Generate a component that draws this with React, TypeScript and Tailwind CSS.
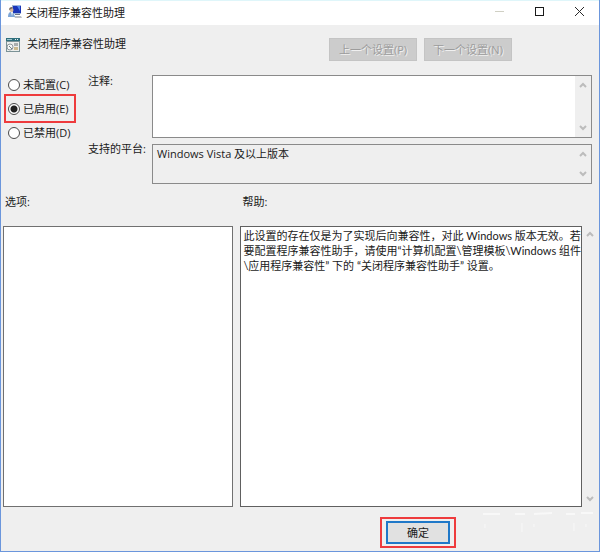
import { useState } from "react";

const FONT = "font-['Open_Sans','Noto_Sans_CJK_SC',sans-serif]";

function Chevron({ up = false }: { up?: boolean }) {
  return (
    <svg width="8" height="6" viewBox="0 0 8 6" fill="none" stroke="#bcbcbc" strokeWidth="2" aria-hidden="true">
      <path d={up ? "M1 5 L4 2 L7 5" : "M1 1 L4 4 L7 1"} />
    </svg>
  );
}

function ScrollTrack({ className }: { className: string }) {
  return (
    <div className={`flex flex-col items-center justify-between bg-[#efefef] ${className}`}>
      <Chevron up />
      <Chevron />
    </div>
  );
}

function ComputerIcon() {
  return (
    <svg width="14" height="14" viewBox="0 0 14 14" aria-hidden="true">
      <rect x="4" y="0" width="9" height="9" fill="#9fb4d8" />
      <rect x="5" y="1" width="8" height="7" fill="#1a35b8" />
      <path d="M9 1h3v5z" fill="#4f86ee" />
      <path d="M7 9h5v1H7z" fill="#6d7888" />
      <path d="M6 11h7l1 2H7z" fill="#b9bec6" />
      <circle cx="3.5" cy="5" r="2" fill="#d9b79a" />
      <path d="M1 5q0-3 3-3l1 1-2 1z" fill="#75685c" />
      <path d="M0 12q0-5 3-5t4 5z" fill="#7ea6d6" />
      <path d="M3 7l1 4 1-4z" fill="#f2f6fa" />
    </svg>
  );
}

function PolicyIcon() {
  return (
    <svg width="15" height="15" viewBox="0 0 15 15" aria-hidden="true">
      <rect x="0" y="1" width="14" height="14" fill="#7b9296" />
      <rect x="1" y="5" width="12" height="9" fill="#eceeec" />
      <rect x="0" y="1" width="14" height="3" fill="#2f6f7c" />
      <path d="M1 2.5h5" stroke="#9cc4cc" />
      <path d="M9 2.5h1M11 2.5h1" stroke="#e6eeee" />
      <circle cx="4" cy="10" r="3" fill="#f4f6f6" stroke="#8e989c" />
      <path d="M3 9l3 3" stroke="#6f8084" />
      <rect x="8" y="6" width="4" height="3" fill="#a9aeae" />
      <rect x="8" y="10" width="4" height="3" fill="#c9b98e" />
    </svg>
  );
}

const STATES = [
  { id: "unset", label: "未配置(C)" },
  { id: "enabled", label: "已启用(E)" },
  { id: "disabled", label: "已禁用(D)" },
];

export default function App() {
  const [state, setState] = useState("enabled");

  return (
    <div className={`flex h-screen flex-col border border-t-0 border-[#6b96dc] bg-[#efefef] text-[11px] leading-[15px] text-[#1a1a1a] ${FONT}`}>
      <header className="flex h-[25px] shrink-0 items-start border-t border-[#dff6fa] bg-white pl-[7px]">
        <div className="flex flex-1 gap-1 pt-1">
          <ComputerIcon />
          <h1>关闭程序兼容性助理</h1>
        </div>
        <button aria-label="最小化" className="flex h-[21px] w-10 items-center justify-center">
          <svg width="9" height="9" viewBox="0 0 9 9"><path d="M0 4.5h9" stroke="#d0d0c4" /></svg>
        </button>
        <button aria-label="最大化" className="flex h-[21px] w-10 items-center justify-center">
          <svg width="9" height="9" viewBox="0 0 9 9"><rect x="0.5" y="0.5" width="8" height="8" fill="none" stroke="#1a1a1a" /></svg>
        </button>
        <button aria-label="关闭" className="flex h-[21px] w-10 items-center justify-center">
          <svg width="9" height="9" viewBox="0 0 9 9"><path d="M0 0L9 9M9 0L0 9" stroke="#2a2a2a" /></svg>
        </button>
      </header>

      <div className="flex h-[50px] shrink-0 items-start justify-between pt-[11px] pr-[87px] pl-[5px]">
        <div className="flex gap-[6px]">
          <div className="pt-[1px]">
            <PolicyIcon />
          </div>
          <h2>关闭程序兼容性助理</h2>
        </div>
        <div className="flex gap-[7px] pt-[2px]">
          {["上一个设置(P)", "下一个设置(N)"].map((text) => (
            <button key={text} disabled className="h-[23px] w-[88px] border border-[#c4c4c4] bg-[#cccccc] text-[#9c9c9c] [text-shadow:1px_1px_0_#f0f0f0]">
              {text}
            </button>
          ))}
        </div>
      </div>

      <div className="flex shrink-0 pr-[7px]">
        <fieldset className="flex w-[87px] shrink-0 flex-col items-start gap-[9px] pt-[2px] pl-[7px]">
          {STATES.map(({ id, label }) => (
            <label key={id} className="relative flex items-center gap-[3px] whitespace-nowrap">
              <input
                type="radio"
                name="state"
                checked={state === id}
                onChange={() => setState(id)}
                className="size-3 appearance-none rounded-full border border-[#4a4a4a] bg-white checked:bg-[radial-gradient(circle,#222_0_3px,#fff_4px)]"
              />
              {label}
              {id === "enabled" && <span className="absolute -inset-y-[7px] -right-[7px] -left-1 border-2 border-[#ee3b3d]" />}
            </label>
          ))}
        </fieldset>
        <div className="grid min-w-0 flex-1 grid-cols-[64px_1fr] gap-y-[6px]">
          <label htmlFor="note" className="-mt-[2px]">注释:</label>
          <div className="flex h-[63px] border border-[#8a8a8a] bg-white">
            <textarea id="note" className="min-w-0 flex-1 resize-none px-1 outline-none" />
            <ScrollTrack className="w-4 py-[6px]" />
          </div>
          <label htmlFor="platform" className="-mt-[3px]">支持的平台:</label>
          <div className="flex h-10 border border-[#8a8a8a]">
            <textarea id="platform" readOnly value="Windows Vista 及以上版本" className="min-w-0 flex-1 resize-none overflow-hidden px-1 pt-[1px] outline-none" />
            <ScrollTrack className="w-4 py-[6px]" />
          </div>
        </div>
      </div>

      <div className="grid min-h-0 flex-1 grid-cols-[230fr_358fr] gap-x-[7px] pt-[10px] pl-[2px]">
        <section className="flex min-h-0 flex-col gap-[17px]">
          <h3 className="pl-[2px]">选项:</h3>
          <div className="flex-1 border border-[#707070] bg-white" />
        </section>
        <section className="flex min-h-0 flex-col gap-[17px]">
          <h3 className="pl-[2px]">帮助:</h3>
          <div className="flex min-h-0 flex-1">
            <p className="min-w-0 flex-1 border border-[#606060] bg-white pt-[1px] pl-[2px] font-['Lato','Noto_Sans_CJK_SC',sans-serif]">
              此设置的存在仅是为了实现后向兼容性，对此 Windows 版本无效。若要配置程序兼容性助手，请使用“计算机配置\管理模板\Windows 组件\应用程序兼容性” 下的 “关闭程序兼容性助手” 设置。
            </p>
            <ScrollTrack className="w-[17px] py-[5px]" />
          </div>
        </section>
      </div>

      <footer className="flex h-[44px] shrink-0 items-center justify-end pt-[6px] pr-[149px]">
        <div className="relative">
          <button className="h-[23px] w-[64px] border-2 border-[#1f78c8] bg-[#e1e1e1]">确定</button>
          <span className="pointer-events-none absolute -inset-x-[6px] -inset-y-1 border-2 border-[#ee3b3d]" />
          <svg className="absolute -top-[10px] left-[94px]" width="116" height="24" viewBox="0 0 116 24" fill="none" stroke="#f8f8f8" strokeWidth="2" aria-hidden="true">
            <path d="M3 3h17M35 3h10M54 3l18-1M86 3h9M101 2h12" />
            <path d="M42 12v9M94 12v8M5 13v4M54 13v3M106 13v3" strokeWidth="1" />
          </svg>
        </div>
      </footer>
    </div>
  );
}
